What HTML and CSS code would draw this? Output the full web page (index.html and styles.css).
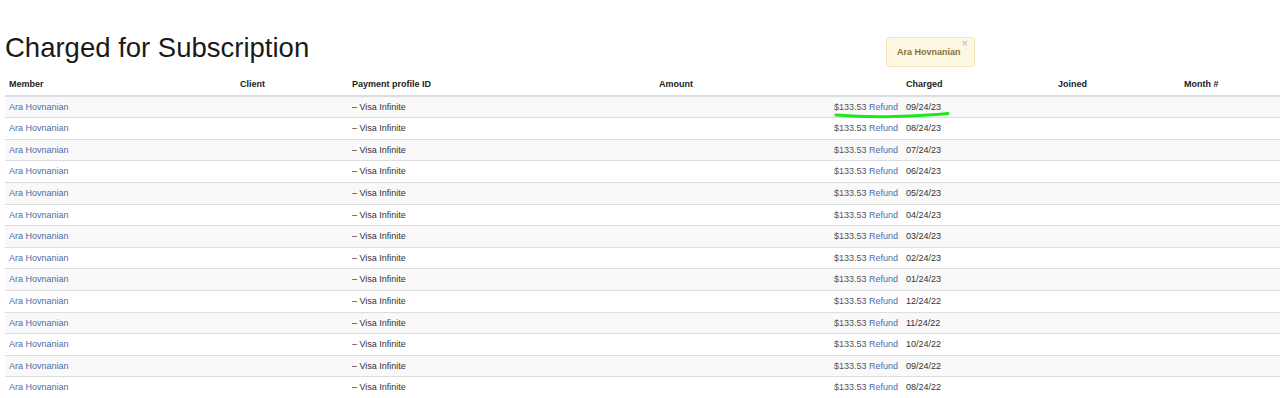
FILE: index.html
```html
<!DOCTYPE html>
<html>
<head>
    <meta charset="UTF-8">
    <meta name="viewport" content="width=device-width, initial-scale=1.0">
    <title>Charged for Subscription</title>
    <link rel="stylesheet" href="styles.css">
</head>
<body>
    <div class="page">
        <h1 class="page-title">Charged for Subscription</h1>

        <div class="toast">
            <span class="toast-close">&times;</span>
            <strong>Ara Hovnanian</strong>
        </div>

        <div class="table-wrap">
            <table class="charges">
                <colgroup>
                    <col style="width: 231px">
                    <col style="width: 112px">
                    <col style="width: 307px">
                    <col style="width: 247px">
                    <col style="width: 152px">
                    <col style="width: 126px">
                    <col>
                </colgroup>
                <thead>
                    <tr>
                        <th>Member</th>
                        <th>Client</th>
                        <th>Payment profile ID</th>
                        <th>Amount</th>
                        <th>Charged</th>
                        <th>Joined</th>
                        <th>Month #</th>
                    </tr>
                </thead>
                <tbody id="rows"></tbody>
            </table>

            <!-- marker stroke drawn over the first row -->
            <svg class="marker" width="120" height="8" viewBox="0 0 120 8">
                <path d="M2 4 C 20 5.5, 40 6, 60 5.5 S 100 4, 114 2.5" fill="none" stroke="#1ee61e" stroke-width="3" stroke-linecap="round"/>
            </svg>
        </div>
    </div>

    <script>
        const dates = ['09/24/23', '08/24/23', '07/24/23', '06/24/23', '05/24/23', '04/24/23', '03/24/23',
                       '02/24/23', '01/24/23', '12/24/22', '11/24/22', '10/24/22', '09/24/22', '08/24/22'];
        const tbody = document.getElementById('rows');

        dates.forEach(date => {
            const tr = document.createElement('tr');
            tr.innerHTML = `
                <td><a href="#">Ara Hovnanian</a></td>
                <td></td>
                <td>&ndash; Visa Infinite</td>
                <td class="amount">$133.53 <a href="#">Refund</a></td>
                <td>${date}</td>
                <td></td>
                <td></td>`;
            tbody.appendChild(tr);
        });
    </script>
</body>
</html>
```

FILE: styles.css
```css
* {
    box-sizing: border-box;
}

body {
    margin: 0;
    font-family: 'Liberation Sans', Arial, sans-serif;
    font-size: 9px;
    color: #333;
    background: #fff;
}

a {
    color: #4a6ea9;
    text-decoration: none;
}

.page {
    position: relative;
    padding: 33px 0 0 5px;
}

.page-title {
    margin: 0;
    font-size: 27.5px;
    font-weight: normal;
    line-height: 30px;
    color: #1a1a1a;
}

.toast {
    position: absolute;
    top: 37px;
    left: 886px;
    width: 89px;
    height: 30px;
    padding: 9px 10px;
    background: #fcf8e3;
    border: 1px solid #f6e3b8;
    border-radius: 3px;
    color: #8a6d3b;
    font-size: 9px;
    line-height: 11px;
}

.toast-close {
    position: absolute;
    top: 0;
    right: 6px;
    font-size: 11px;
    line-height: 11px;
    color: #b9b2a6;
}

.table-wrap {
    position: relative;
    margin-top: 11px;
}

.charges {
    width: 1275px;
    border-collapse: collapse;
    table-layout: fixed;
}

.charges th,
.charges td {
    padding: 2px 4px;
    line-height: 16.6px;
    text-align: left;
    white-space: nowrap;
}

.charges th {
    font-weight: bold;
    color: #222;
    border-bottom: 2px solid #ddd;
}

.charges td {
    border-top: 1px solid #ddd;
}

.charges tbody tr:nth-child(odd) {
    background: #f9f9f9;
}

.charges td.amount {
    text-align: right;
    color: #555;
}

.marker {
    position: absolute;
    top: 37px;
    left: 829px;
}
```
